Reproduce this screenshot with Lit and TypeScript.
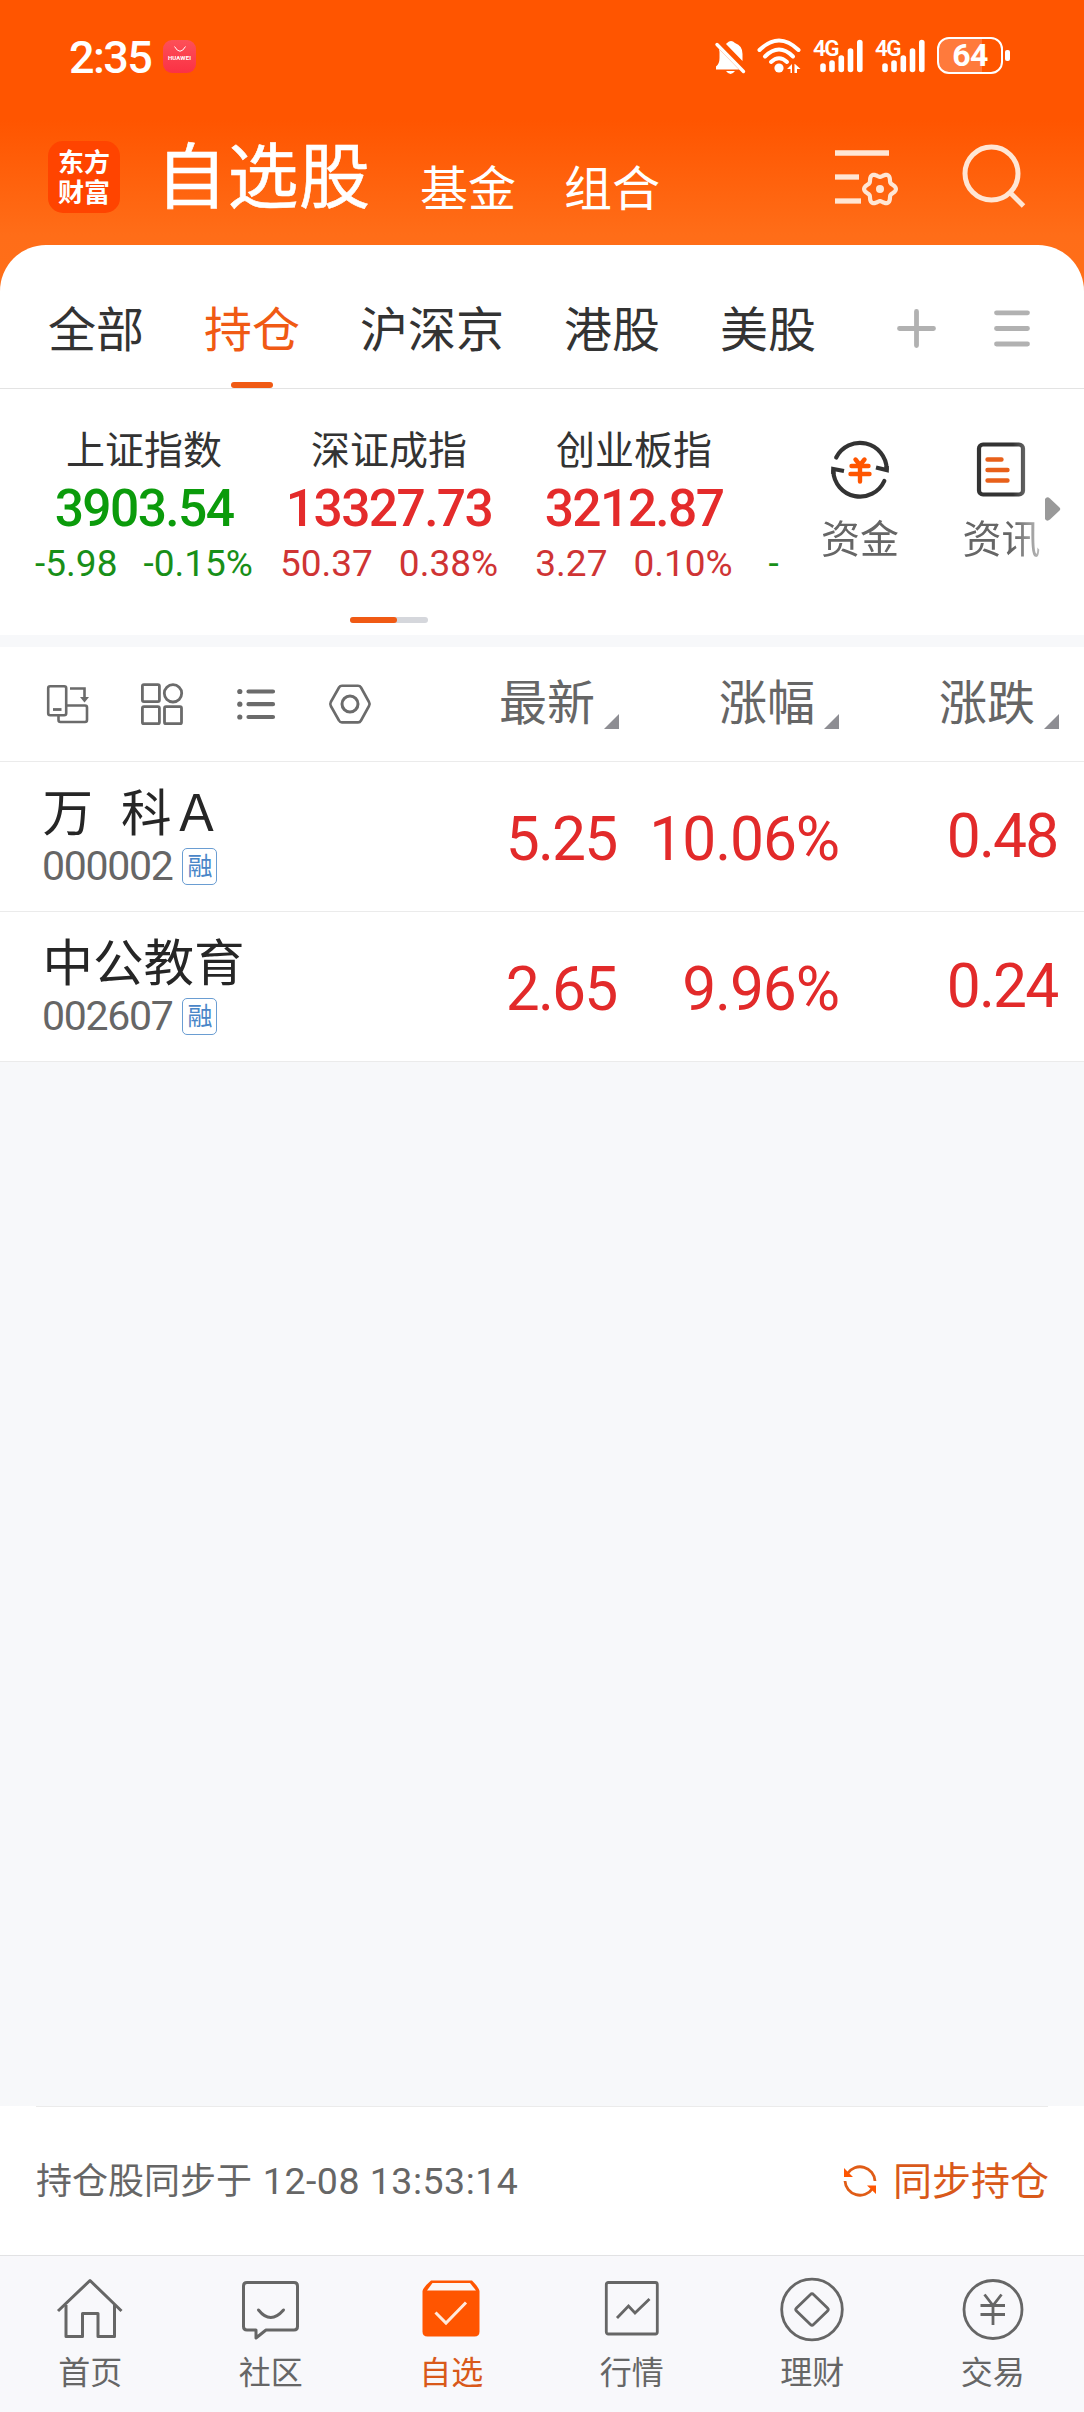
import { LitElement, html, svg, css, TemplateResult } from "lit";
import { customElement, property } from "lit/decorators.js";
import { classMap } from "lit/directives/class-map.js";

interface IndexQuote { name: string; value: string; change: string; percent: string; down?: boolean; }
interface Holding { name: string; code: string; tag: string; last: string; percent: string; change: string; }

const INDICES: IndexQuote[] = [
  { name: "上证指数", value: "3903.54", change: "-5.98", percent: "-0.15%", down: true },
  { name: "深证成指", value: "13327.73", change: "50.37", percent: "0.38%" },
  { name: "创业板指", value: "3212.87", change: "3.27", percent: "0.10%" },
];

const HOLDINGS: Holding[] = [
  { name: "万\u00a0\u00a0科\uff21", code: "000002", tag: "融", last: "5.25", percent: "10.06%", change: "0.48" },
  { name: "中公教育", code: "002607", tag: "融", last: "2.65", percent: "9.96%", change: "0.24" },
];

// Wavy gear outline with six lobes around (cx, cy).
const gearPath = (cx: number, cy: number, r: number, depth: number): string => {
  const pts: string[] = [];
  for (let i = 0; i < 72; i++) {
    const a = (i / 72) * Math.PI * 2;
    const d = r + depth * Math.cos(6 * a);
    pts.push(`${(cx + d * Math.cos(a)).toFixed(2)} ${(cy + d * Math.sin(a)).toFixed(2)}`);
  }
  return `M${pts.join("L")}Z`;
};

const ICONS: Record<string, { w: number; h: number; body: TemplateResult }> = {
  bell: { w: 30, h: 34, body: svg`
    <path fill="#fff" d="M4 9 L24 29.500 H1 V26.500 Q4.500 24 4.500 18 V12 Z M12 3 Q16 -1 20 3 Q27.500 5.500 27.500 14 V21 L11 4 Z M11 31 H20 Q15.500 37 11 31 Z"/>
    <path d="M4 3 L29.500 29" stroke="#ff5500" stroke-width="3"/>
    <path d="M2 4.500 L28.500 31.500" stroke="#fff" stroke-width="3.400" stroke-linecap="round"/>` },
  wifi: { w: 44, h: 35, body: svg`
    <g fill="none" stroke="#fff" stroke-width="4" stroke-linecap="round">
      <path d="M2.500 12 Q22 -7 41.500 12"/><path d="M8 18.500 Q22 4.500 36 18.500"/><path d="M14 24 Q22 16.500 30 24"/>
    </g><circle cx="22" cy="30" r="4.600" fill="#fff"/>
    <path fill="#fff" d="M30 31 L35 26 V35 H33.500 V31 Z M38 26 L43.500 31 H40 V35 H37.500 V26Z"/>` },
  bars: { w: 44, h: 34, body: svg`
    <g stroke="#fff" stroke-width="5.600" stroke-linecap="round">
      <path d="M4 27 V30.500"/><path d="M13 24 V30.500"/><path d="M22.300 19 V30.500"/><path d="M31.500 12 V30.500"/><path d="M40.800 3.500 V30.500"/>
    </g>` },
  filter: { w: 64, h: 60, body: svg`
    <g stroke="#ffe6d4" stroke-width="5.300"><path d="M0 11 H54"/><path d="M0 35 H24"/><path d="M0 59 H26"/></g>
    <path d="${gearPath(45, 47, 14, 1.9)}" fill="none" stroke="#ffe6d4" stroke-width="4.200" stroke-linejoin="round"/><circle cx="45" cy="47" r="4" fill="#ffe6d4"/>` },
  search: { w: 64, h: 64, body: svg`
    <g fill="none" stroke="#ffe6d4" stroke-width="5"><circle cx="29.500" cy="29.500" r="26.500"/><path d="M48 48.500 L61.500 62"/></g>` },
  plus: { w: 39, h: 39, body: svg`<path d="M2.500 19.500 H36.500 M19.500 2.500 V36.500" stroke="#b1b1b1" stroke-width="4.800" stroke-linecap="round"/>` },
  menu: { w: 36, h: 39, body: svg`<path d="M2.500 3.800 H33.500 M2.500 19.500 H33.500 M2.500 35 H33.500" stroke="#b1b1b1" stroke-width="4.800" stroke-linecap="round"/>` },
  funds: { w: 60, h: 60, body: svg`
    <g fill="none" stroke="#333" stroke-width="4.200">
      <path stroke-linecap="round" d="M6.200 17.500 A26.700 26.700 0 0 1 56.700 29"/><path d="M56.700 26 V30 L46 27.500"/>
      <path stroke-linecap="round" d="M54.300 41 A26.700 26.700 0 0 1 3.300 31"/><path d="M3.300 34 V29 L14 31"/>
    </g>
    <path d="M25.500 19.500 L30 25 L34.500 19.500 M21.500 26 H38.500 M20.500 34 H39.500 M30 26 V41.500" fill="none" stroke="#ff5500" stroke-width="4.400" stroke-linecap="round"/>` },
  news: { w: 60, h: 60, body: svg`
    <rect x="7" y="4.500" width="44" height="50" rx="4" fill="none" stroke="#333" stroke-width="4.200"/>
    <path d="M15.500 19.500 H29.500 M15.500 30 H35.500 M15.500 40.500 H35.500" stroke="#e8601a" stroke-width="4.400" stroke-linecap="round"/>` },
  arrow: { w: 16, h: 26, body: svg`<path d="M0 3 Q2 0 5 2.500 L14.500 11.500 Q16 13 14.500 14.500 L5 23.500 Q2 26 0 23 Z" fill="#999"/>` },
  rotate: { w: 44, h: 44, body: svg`
    <g fill="none" stroke="#6b6b6b" stroke-width="2.600"><rect x="3.200" y="4.200" width="18" height="29" rx="2"/>
    <path d="M21.500 23.500 H40 Q42 23.500 42 25.500 V38 Q42 40 40 40 H15.500 Q13.500 40 13.500 38 V33.500"/>
    <path d="M25 6.500 H39.500 V17"/><path d="M8 27.500 H16.500" stroke-width="2.800"/></g><path d="M35 15 H44 L39.500 20.500 Z" fill="#6b6b6b"/>` },
  grid: { w: 44, h: 44, body: svg`
    <g fill="none" stroke="#6b6b6b" stroke-width="2.800"><rect x="3.400" y="2.600" width="17" height="17" rx="1.500"/><circle cx="34" cy="11.300" r="8.700"/>
    <rect x="3.400" y="24.700" width="17" height="17" rx="1.500"/><rect x="25.500" y="24.700" width="17" height="17" rx="1.500"/></g>` },
  list: { w: 44, h: 44, body: svg`
    <path d="M15.500 9.500 H40 M15.500 22.200 H40 M15.500 35 H40" stroke="#6b6b6b" stroke-width="4.200" stroke-linecap="round"/>
    <g fill="#6b6b6b"><circle cx="6.800" cy="9.500" r="2.600"/><circle cx="6.800" cy="22.200" r="2.600"/><circle cx="6.800" cy="35" r="2.600"/></g>` },
  hex: { w: 44, h: 44, body: svg`
    <g transform="translate(1 0)" fill="none" stroke="#6b6b6b" stroke-width="2.600"><path stroke-linejoin="round" d="M14 3.800 H30 Q32 3.800 33 5.500 L41 20 Q42.200 22 41 24 L33 38.500 Q32 40.400 30 40.400 H14 Q12 40.400 11 38.500 L2.800 24 Q1.800 22 2.800 20 L11 5.500 Q12 3.800 14 3.800 Z"/><circle cx="22" cy="22" r="8" stroke-width="3"/></g>` },
  sync: { w: 34, h: 34, body: svg`
    <g fill="none" stroke="#e05c16" stroke-width="2.800"><path d="M4.500 9.500 A15 15 0 0 1 32 17"/><path d="M29.500 24.500 A15 15 0 0 1 2 17"/></g>
    <path d="M1 4 V13 H10 Z M33 30 V21.500 H24 Z" fill="#ff5500"/>` },
  home: { w: 66, h: 66, body: svg`
    <g fill="none" stroke="#666" stroke-width="3" stroke-linejoin="round"><path d="M1 35 L33 4.500 L64.500 35"/><path d="M9 29 V60.500 H25.500 V37.500 H41 V60.500 H57.500 V29"/></g>` },
  chat: { w: 66, h: 66, body: svg`
    <g fill="none" stroke="#666" stroke-width="3" stroke-linejoin="round"><path d="M18 54 H9 Q5.500 54 5.500 50.500 V10 Q5.500 6.500 9 6.500 H56 Q59.500 6.500 59.500 10 V50.500 Q59.500 54 56 54 H28 L18 62 V54 Z"/>
    <path stroke-linecap="round" d="M20.500 34 Q32.500 49 45.500 34"/></g>` },
  picked: { w: 66, h: 66, body: svg`
    <path d="M13 4.500 H54 Q60.500 11 61.500 15 V55.500 Q61.500 60.500 56.500 60.500 H9.500 Q4.500 60.500 4.500 55.500 V15 Q5.500 11 13 4.500 Z" fill="#ff5500"/>
    <path d="M14.500 7 H52 L58 14.500 H9 Z" fill="#fbf6f4"/>
    <path d="M17.500 36.500 L28 47 L48 26.500" fill="none" stroke="#ffe9dc" stroke-width="3"/>` },
  market: { w: 66, h: 66, body: svg`
    <g fill="none" stroke="#666" stroke-width="2.800"><rect x="7.300" y="6.500" width="51" height="51.500" rx="2"/><path d="M18 42 L29.500 30 L36 37 L50.500 23"/></g>` },
  wealth: { w: 66, h: 66, body: svg`
    <g fill="none" stroke="#666" stroke-width="2.800"><circle cx="33" cy="33.500" r="30.300"/><path stroke-linejoin="round" d="M31.500 18.500 Q33 16.800 34.500 18.500 L48.500 32 Q50 33.500 48.500 35 L34.500 48.500 Q33 50 31.500 48.500 L17.500 35 Q16 33.500 17.500 32 Z"/></g>` },
  trade: { w: 66, h: 66, body: svg`
    <g fill="none" stroke="#666" stroke-width="2.800"><circle cx="33" cy="33.500" r="29"/><path d="M24.500 18.500 L33 29.500 L41.500 18.500 M20.500 29.500 H45 M20.500 38.500 H45 M33 29.500 V49"/></g>` },
};

@customElement("line-icon")
class LineIcon extends LitElement {
  @property() name = "";
  static styles = css`:host { display: block; flex: none; } svg { display: block; overflow: visible; }`;
  render() {
    const i = ICONS[this.name];
    return html`<svg width="${i.w}" height="${i.h}" viewBox="0 0 ${i.w} ${i.h}">${i.body}</svg>`;
  }
}

@customElement("status-bar")
class StatusBar extends LitElement {
  static styles = css`
    :host { display: flex; height: 112px; padding: 0 74px 0 69px; box-sizing: border-box; color: #fff; font-family: Roboto, sans-serif; }
    .time { font-size: 45px; font-weight: 500; line-height: 50px; letter-spacing: -1.6px; margin-top: 33px; width: 94px; }
    .shop { width: 33px; height: 33px; margin-top: 40px; border-radius: 9px; background: linear-gradient(#fd5058, #fb3145); display: flex; flex-direction: column; align-items: center; }
    .shop svg { display: block; margin-top: 6px; }
    .brand { font-size: 6px; line-height: 8px; font-weight: 700; margin-top: 2px; letter-spacing: 0.1px; }
    .spacer { flex: 1; }
    .bell { margin: 40px 12px 0 0; }
    .wifi { margin: 38px 12px 0 0; }
    .cell { display: grid; width: 50px; height: 34px; margin: 39px 12px 0 0; }
    .cell > * { grid-area: 1 / 1; }
    .cell .g { font-size: 22.5px; line-height: 18px; font-weight: 600; letter-spacing: -1.5px; }
    .cell line-icon { margin-left: 6px; }
    .battery { width: 66px; height: 37px; margin-top: 37px; border: 2.5px solid #fff; border-radius: 12px; box-sizing: border-box; text-align: center;
      background: linear-gradient(90deg, #ff7a3c 0 70%, transparent 70%); font-size: 32px; line-height: 33px; font-weight: 700; letter-spacing: -0.6px; }
    .nub { width: 5px; height: 11px; border-radius: 2px; background: #fff; margin: 50px 0 0 2px; }
  `;
  render() {
    return html`
      <span class="time">2:35</span>
      <div class="shop"><svg width="12" height="6" viewBox="0 0 12 6"><path d="M0.500 0.500 Q6 10 11.500 0.500" fill="none" stroke="#fff"/></svg><span class="brand">HUAWEI</span></div>
      <span class="spacer"></span>
      <line-icon class="bell" name="bell"></line-icon>
      <line-icon class="wifi" name="wifi"></line-icon>
      ${[0, 1].map(() => html`<div class="cell"><span class="g">4G</span><line-icon name="bars"></line-icon></div>`)}
      <div class="battery">64</div><span class="nub"></span>`;
  }
}

@customElement("title-bar")
class TitleBar extends LitElement {
  static styles = css`
    :host { display: flex; align-items: flex-start; height: 133px; padding: 0 58px 0 48px; box-sizing: border-box; color: #fff; }
    .logo { width: 72px; height: 72px; margin-top: 29px; border-radius: 15px; background: #ff4400; box-sizing: border-box; padding-top: 7px; text-align: center;
      font-family: "Liberation Sans", "Noto Sans CJK SC", sans-serif; font-size: 26px; line-height: 30px; font-weight: 700; }
    .logo span { display: block; }
    h1 { margin: 19px 0 0 36px; width: 264px; font-size: 71px; line-height: 80px; font-weight: 400; letter-spacing: 0.5px; -webkit-text-stroke: 0.6px #fff; }
    .link { font-size: 48px; line-height: 60px; margin-top: 43px; width: 144px; }
    .spacer { flex: 1; }
    .filter { margin: 30px 63px 0 0; }
    .search { margin-top: 32px; }
  `;
  render() {
    return html`
      <div class="logo"><span>东方</span><span>财富</span></div>
      <h1>自选股</h1><span class="link">基金</span><span class="link">组合</span>
      <span class="spacer"></span>
      <line-icon class="filter" name="filter"></line-icon>
      <line-icon class="search" name="search"></line-icon>`;
  }
}

@customElement("group-tabs")
class GroupTabs extends LitElement {
  static styles = css`
    :host { display: flex; height: 144px; box-sizing: border-box; border-bottom: 1px solid #e3e3e3; padding: 0 54px 0 48px; color: #333; }
    .tabs { display: flex; gap: 60px; }
    .tab { display: flex; flex-direction: column; align-items: center; justify-content: space-between; font-size: 48px; line-height: 60px; padding-top: 51px; box-sizing: border-box; white-space: nowrap; }
    .tab.on { color: #f05a14; }
    .tab.on::after { content: ""; width: 42px; height: 6px; border-radius: 3px; background: #f05a14; }
    .plus { margin: 64px 58px 0 auto; }
    .menu { margin-top: 64px; }
  `;
  render() {
    return html`<div class="tabs">
      ${["全部", "持仓", "沪深京", "港股", "美股"].map((t, i) => html`<div class=${classMap({ tab: true, on: i === 1 })}>${t}</div>`)}
      </div><line-icon class="plus" name="plus"></line-icon><line-icon class="menu" name="menu"></line-icon>`;
  }
}

@customElement("index-strip")
class IndexStrip extends LitElement {
  static styles = css`
    :host { display: flex; flex-direction: column; height: 246px; box-sizing: border-box; }
    .row { display: flex; height: 228px; }
    .quotes { display: flex; width: 779px; padding-left: 21.5px; box-sizing: border-box; overflow: hidden; }
    .quote { flex: none; width: 245px; text-align: center; padding-top: 33px; box-sizing: border-box; color: #e42b2b; font-family: Roboto, sans-serif; }
    .quote.down { color: #0b9b0b; }
    .name { font-family: "Noto Sans CJK SC", sans-serif; font-size: 39px; line-height: 50px; color: #333; }
    .value { font-size: 51.5px; line-height: 60px; font-weight: 500; letter-spacing: -1.6px; margin-top: 7px; }
    .delta { display: flex; justify-content: center; gap: 26px; font-size: 37px; line-height: 46px; margin-top: 2px; color: #cf3434; }
    .down .delta { color: #188f18; }
    .next { flex: none; padding: 152px 0 0 12px; font: 37px/46px Roboto, sans-serif; color: #188f18; }
    .shortcuts { display: flex; width: 266px; padding-left: 31px; box-sizing: border-box; -webkit-mask-image: linear-gradient(90deg, #000 88%, rgba(0,0,0,.35)); mask-image: linear-gradient(90deg, #000 88%, rgba(0,0,0,.35)); }
    .shortcut { flex: none; width: 100px; margin-right: 41.500px; display: flex; flex-direction: column; align-items: center; padding-top: 51px; font-size: 39px; line-height: 50px; color: #666; }
    .shortcut span { margin-top: 11px; }
    .arrow { margin-top: 107px; }
    .pager { width: 78px; height: 6px; border-radius: 3px; background: #d5d7dc; margin-left: 350px; }
    .pager div { width: 47px; height: 6px; border-radius: 3px; background: #f05a14; }
  `;
  render() {
    return html`<div class="row">
      <div class="quotes">
        ${INDICES.map((q) => html`<div class=${classMap({ quote: true, down: !!q.down })}>
          <div class="name">${q.name}</div><div class="value">${q.value}</div>
          <div class="delta"><span>${q.change}</span><span>${q.percent}</span></div></div>`)}
        <span class="next">-</span>
      </div>
      <div class="shortcuts">
        <div class="shortcut"><line-icon name="funds"></line-icon><span>资金</span></div>
        <div class="shortcut"><line-icon name="news"></line-icon><span>资讯</span></div>
      </div>
      <line-icon class="arrow" name="arrow"></line-icon>
    </div><div class="pager"><div></div></div>`;
  }
}

@customElement("holdings-table")
class HoldingsTable extends LitElement {
  static styles = css`
    :host { display: block; }
    .line { display: grid; grid-template-columns: 399px 220px 220px 220px; box-sizing: border-box; border-bottom: 1px solid #ebebeb; background: #fff; }
    .head { height: 115px; color: #666; }
    .tools { display: flex; gap: 50px; padding: 35px 0 0 45px; }
    .sort { display: flex; justify-content: flex-end; gap: 9px; font-size: 48px; line-height: 60px; padding-top: 22px; }
    .sort::after { content: ""; width: 15px; height: 15px; margin-top: 45px; background: #8e8e93; clip-path: polygon(100% 0, 100% 100%, 0 100%); }
    .stock { height: 150px; }
    .name { font-family: "Liberation Sans", "Noto Sans CJK SC", sans-serif; font-size: 50.5px; line-height: 60px; color: #262626; padding: 22px 0 0 42.5px; white-space: nowrap; }
    .meta { display: flex; padding: 4px 0 0 42px; font-family: Roboto, sans-serif; font-size: 41px; line-height: 36px; letter-spacing: -1.3px; color: #666; }
    .tag { width: 35px; height: 37px; margin-left: 10px; box-sizing: border-box; border: 1.500px solid #6a9dd2; border-radius: 5px; text-align: center; letter-spacing: 0;
      font-family: "Noto Sans CJK SC", sans-serif; font-size: 25px; line-height: 31px; color: #4a86c8; }
    .num { text-align: right; font-family: Roboto, sans-serif; font-size: 60.5px; line-height: 70px; letter-spacing: -1.800px; color: #e22a2a; padding: 43px 2.5px 0 0; }
    .num.pct { padding-right: 0; letter-spacing: -1.1px; }
    .num.up { padding-top: 40px; padding-right: 1.5px; }
  `;
  render() {
    return html`
      <div class="line head">
        <div class="tools">${["rotate", "grid", "list", "hex"].map((n) => html`<line-icon name=${n}></line-icon>`)}</div>
        ${["最新", "涨幅", "涨跌"].map((t) => html`<div class="sort">${t}</div>`)}
      </div>
      ${HOLDINGS.map((h) => html`<div class="line stock">
        <div><div class="name">${h.name}</div><div class="meta"><span>${h.code}</span><span class="tag">${h.tag}</span></div></div>
        <div class="num">${h.last}</div><div class="num pct">${h.percent}</div><div class="num up">${h.change}</div>
      </div>`)}`;
  }
}

@customElement("sync-bar")
class SyncBar extends LitElement {
  static styles = css`
    :host { display: block; height: 149px; padding: 0 36px; background: #fff; box-sizing: border-box; }
    .inner { display: flex; align-items: flex-start; border-top: 1px solid #ebebeb; }
    .time { font-family: Roboto, "Noto Sans CJK SC", sans-serif; font-size: 36px; line-height: 50px; margin-top: 49px; color: #666; white-space: pre; }
    .stamp { font-size: 37.500px; letter-spacing: 0.500px; margin-left: 1px; }
    .sync { margin: 57px 16px 0 auto; }
    .action { font-size: 39px; line-height: 50px; margin-top: 46px; color: #d9591a; margin-right: -1px; }
  `;
  render() {
    return html`<div class="inner"><span class="time">持仓股同步于<span class="stamp"> 12-08 13:53:14</span></span>
      <line-icon class="sync" name="sync"></line-icon><span class="action">同步持仓</span></div>`;
  }
}

@customElement("bottom-nav")
class BottomNav extends LitElement {
  static styles = css`
    :host { display: grid; grid-template-columns: repeat(6, 1fr); height: 157px; box-sizing: border-box; border-top: 1px solid #e2e2e4; background: #f8f8fb; padding-right: 1px; }
    .item { display: flex; flex-direction: column; align-items: center; padding-top: 20px; font-size: 32px; line-height: 40px; color: #666; }
    .item span { margin-top: 8px; }
    .item.on { color: #d9591a; }
  `;
  render() {
    const items = [["home", "首页"], ["chat", "社区"], ["picked", "自选"], ["market", "行情"], ["wealth", "理财"], ["trade", "交易"]];
    return html`${items.map(([icon, label]) => html`<div class=${classMap({ item: true, on: icon === "picked" })}>
      <line-icon name=${icon}></line-icon><span>${label}</span></div>`)}`;
  }
}

@customElement("app-root")
class AppRoot extends LitElement {
  static styles = css`
    :host { display: flex; flex-direction: column; width: 1084px; height: 2412px; overflow: hidden; font-family: "Noto Sans CJK SC", sans-serif;
      background: linear-gradient(#ff5500 0 120px, #ff6d18 235px, #ff6f18 300px, #f7f8fa 300px); }
    .panel { background: #fff; border-radius: 46px 46px 0 0; }
    .band { height: 12px; background: #f7f8fa; }
    .blank { flex: 1; background: #f7f8fa; }
  `;
  render() {
    return html`
      <status-bar></status-bar>
      <title-bar></title-bar>
      <div class="panel"><group-tabs></group-tabs><index-strip></index-strip></div>
      <div class="band"></div>
      <holdings-table></holdings-table>
      <div class="blank"></div>
      <sync-bar></sync-bar>
      <bottom-nav></bottom-nav>`;
  }
}
